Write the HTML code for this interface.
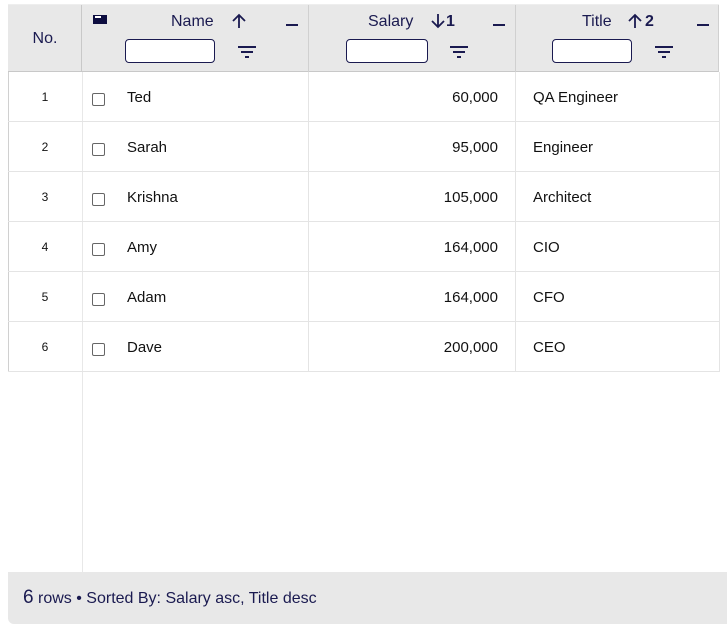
<!DOCTYPE html>
<html><head><meta charset="utf-8"><style>
*{box-sizing:border-box;margin:0;padding:0}
body{width:727px;height:628px;background:#fff;font-family:"Liberation Sans",Arial,sans-serif;position:relative;overflow:hidden}
.a{position:absolute}
.hdr{background:#e8e8e8;top:5px;height:67px;border-bottom:1px solid #c8c8c8}
.ht{color:#1a1a50;font-size:16px}
.inp{position:absolute;width:90px;height:24px;border:1px solid #1a1a50;border-radius:4px;background:#fff;top:39px}
.minus{position:absolute;width:12px;height:2px;background:#1a1a50;top:24px}
.f{position:absolute;background:#1a1a50;height:2px}
.row{position:absolute;left:8px;width:711px;height:50px;border-bottom:1px solid #e4e4e4}
.num{position:absolute;left:0;width:74px;text-align:center;top:18px;font-size:12px;color:#111}
.cb{position:absolute;left:84px;top:21px;width:13px;height:13px;border:1px solid #666;border-radius:2px;background:#fff}
.t{position:absolute;top:17px;font-size:15px;color:#111}
</style></head><body>
<div class="a" style="left:8px;top:4px;width:711px;height:1px;background:#eee"></div>
<div class="a hdr" style="left:8px;width:74px;border-right:1px solid #c8c8c8"></div>
<div class="a ht" style="left:8px;width:74px;top:30px;text-align:center">No.</div>
<div class="a hdr" style="left:82px;width:637px;border-right:1px solid #d0d0d0"></div>
<div class="a" style="left:308px;top:5px;width:1px;height:67px;background:#d0d0d0"></div>
<div class="a" style="left:515px;top:5px;width:1px;height:67px;background:#d0d0d0"></div>
<!-- icon -->
<div class="a" style="left:93px;top:15px;width:14px;height:9px;background:#0d0d40"></div>
<div class="a" style="left:95px;top:16px;width:6px;height:2px;background:#fff"></div>
<!-- Name -->
<div class="a ht" style="left:171px;top:13px">Name</div>
<svg class="a" style="left:231px;top:13px" width="16" height="16"><path d="M8 15V2M2 8L8 2L14 8" stroke="#1a1a50" stroke-width="1.8" fill="none"/></svg>
<div class="minus" style="left:286px"></div>
<div class="inp" style="left:125px"></div>
<div class="f" style="left:238px;top:46px;width:18px"></div><div class="f" style="left:241px;top:51px;width:12px"></div><div class="f" style="left:245px;top:56px;width:4px"></div>
<!-- Salary -->
<div class="a ht" style="left:368px;top:13px">Salary</div>
<svg class="a" style="left:430px;top:13px" width="16" height="16"><path d="M8 1V14M2 8L8 14L14 8" stroke="#1a1a50" stroke-width="1.8" fill="none"/></svg>
<div class="a ht" style="left:446px;top:13px;font-weight:bold">1</div>
<div class="minus" style="left:493px"></div>
<div class="inp" style="left:346px;width:82px"></div>
<div class="f" style="left:450px;top:46px;width:18px"></div><div class="f" style="left:453px;top:51px;width:12px"></div><div class="f" style="left:457px;top:56px;width:4px"></div>
<!-- Title -->
<div class="a ht" style="left:582px;top:13px">Title</div>
<svg class="a" style="left:627px;top:13px" width="16" height="16"><path d="M8 15V2M2 8L8 2L14 8" stroke="#1a1a50" stroke-width="1.8" fill="none"/></svg>
<div class="a ht" style="left:645px;top:13px;font-weight:bold">2</div>
<div class="minus" style="left:697px"></div>
<div class="inp" style="left:552px;width:80px"></div>
<div class="f" style="left:655px;top:46px;width:18px"></div><div class="f" style="left:658px;top:51px;width:12px"></div><div class="f" style="left:662px;top:56px;width:4px"></div>

<!-- body lines -->
<div class="a" style="left:8px;top:72px;width:1px;height:300px;background:#d0d0d0"></div>
<div class="a" style="left:82px;top:72px;width:1px;height:500px;background:#e8e8e8"></div>
<div class="a" style="left:8px;top:371px;width:74px;height:1px;background:#c8c8c8"></div>
<div class="a" style="left:308px;top:72px;width:1px;height:300px;background:#e4e4e4"></div>
<div class="a" style="left:515px;top:72px;width:1px;height:300px;background:#e4e4e4"></div>
<div class="a" style="left:719px;top:72px;width:1px;height:300px;background:#e4e4e4"></div>

<div class="row" style="top:72px"><div class="num">1</div><div class="cb"></div><div class="t" style="left:119px">Ted</div><div class="t" style="right:221px">60,000</div><div class="t" style="left:525px">QA Engineer</div></div>
<div class="row" style="top:122px"><div class="num">2</div><div class="cb"></div><div class="t" style="left:119px">Sarah</div><div class="t" style="right:221px">95,000</div><div class="t" style="left:525px">Engineer</div></div>
<div class="row" style="top:172px"><div class="num">3</div><div class="cb"></div><div class="t" style="left:119px">Krishna</div><div class="t" style="right:221px">105,000</div><div class="t" style="left:525px">Architect</div></div>
<div class="row" style="top:222px"><div class="num">4</div><div class="cb"></div><div class="t" style="left:119px">Amy</div><div class="t" style="right:221px">164,000</div><div class="t" style="left:525px">CIO</div></div>
<div class="row" style="top:272px"><div class="num">5</div><div class="cb"></div><div class="t" style="left:119px">Adam</div><div class="t" style="right:221px">164,000</div><div class="t" style="left:525px">CFO</div></div>
<div class="row" style="top:322px"><div class="num">6</div><div class="cb"></div><div class="t" style="left:119px">Dave</div><div class="t" style="right:221px">200,000</div><div class="t" style="left:525px">CEO</div></div>

<div class="a" style="left:8px;top:572px;width:719px;height:52px;background:#e8e8e8;border-radius:0 0 0 6px"></div>
<div class="a" style="left:23px;top:587px;color:#1a1a50;font-size:16px"><span style="font-size:19px">6</span> rows • Sorted By: Salary asc, Title desc</div>
</body></html>
